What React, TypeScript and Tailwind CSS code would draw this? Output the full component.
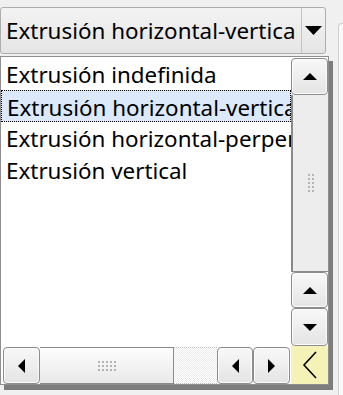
import React from "react";

type Dir = "up" | "down" | "left" | "right";

function Arrow({ dir }: { dir: Dir }) {
  if (dir === "up")
    return (
      <svg width="14" height="7" viewBox="0 0 14 7">
        <polygon points="0,7 7,0 14,7" fill="#000" />
      </svg>
    );
  if (dir === "down")
    return (
      <svg width="14" height="7" viewBox="0 0 14 7">
        <polygon points="0,0 14,0 7,7" fill="#000" />
      </svg>
    );
  if (dir === "left")
    return (
      <svg width="7" height="14" viewBox="0 0 7 14">
        <polygon points="7,0 7,14 0,7" fill="#000" />
      </svg>
    );
  return (
    <svg width="7" height="14" viewBox="0 0 7 14">
      <polygon points="0,0 7,7 0,14" fill="#000" />
    </svg>
  );
}

function ScrollBtn({ dir, className }: { dir: Dir; className: string }) {
  return (
    <div
      className={`flex shrink-0 items-center justify-center rounded-[4px] border border-[#8c8c8c] bg-gradient-to-b from-[#f8f8f8] to-[#e4e4e4] shadow-[inset_0_0_0_1px_#fbfbfb] ${className}`}
    >
      <Arrow dir={dir} />
    </div>
  );
}

function Grip({ cols, rows }: { cols: number; rows: number }) {
  const dots = [];
  for (let r = 0; r < rows; r++)
    for (let c = 0; c < cols; c++)
      dots.push(<rect key={`${r}-${c}`} x={c * 4} y={r * 4} width="2" height="2" fill="#b4b4b4" />);
  return (
    <svg width={cols * 4 - 2} height={rows * 4 - 2}>
      {dots}
    </svg>
  );
}

const items = [
  "Extrusión indefinida",
  "Extrusión horizontal-vertical",
  "Extrusión horizontal-perpendicular",
  "Extrusión vertical",
];

export default function App() {
  return (
    <div className="relative flex h-[395px] w-[343px] overflow-hidden bg-[#f0f0f0] font-['Noto_Sans',sans-serif] text-[22.4px] text-black">
      {/* Combo */}
      <div className="w-[338px] shrink-0 pt-[7px]">
        <div className="flex h-[47px] w-[326px] rounded-[3px] border border-[#adadad] bg-gradient-to-b from-[#f3f3f3] to-[#e5e5e5]">
          <div className="w-[296px] overflow-hidden whitespace-nowrap pl-[5px] leading-[45px]">
            Extrusión horizontal-vertical
          </div>
          <div className="ml-auto flex w-[24px] items-center justify-center border-l border-[#c4c4c4] pr-[1px]">
            <svg width="17" height="9" viewBox="0 0 17 9">
              <polygon points="0,0 17,0 8.5,9" fill="#000" />
            </svg>
          </div>
        </div>
      </div>

      {/* Next panel edge */}
      <div className="mt-[23px] flex-1 rounded-tl-[4px] border-l border-t border-[#cfcfcf] bg-[#f9f9f9]" />

      {/* Dropdown popup */}
      <div className="absolute left-0 top-[56px] flex h-[329px] w-[329px] flex-col border border-[#8f8f8f] bg-white shadow-[4px_5px_0_#7d7d7d]">
        <div className="flex h-[289px]">
          <div className="w-[290px] overflow-hidden pt-[1px]">
            {items.map((t, i) => (
              <div
                key={t}
                className={`h-[32px] whitespace-nowrap pl-[5px] pt-[1px] leading-[31px] ${
                  i === 1 ? "border border-dotted border-black bg-[#dbe9fb] pl-[4px] leading-[29px]" : ""
                }`}
              >
                {t}
              </div>
            ))}
          </div>
          <div className="flex w-[37px] flex-col">
            <ScrollBtn dir="up" className="mt-[1px] h-[37px]" />
            <div className="flex h-[177px] items-center justify-center border-b border-l-2 border-[#8a8a8a] bg-[#ededed]">
              <Grip cols={2} rows={5} />
            </div>
            <ScrollBtn dir="up" className="h-[36px]" />
            <ScrollBtn dir="down" className="h-[38px]" />
          </div>
        </div>
        <div className="flex h-[38px]">
          <div className="flex w-[290px] pl-[2px] pt-[1px]">
            <ScrollBtn dir="left" className="w-[37px]" />
            <div className="flex w-[134px] items-center justify-center border-y border-r border-[#8a8a8a] bg-gradient-to-b from-[#fdfdfd] to-[#e9e9e9]">
              <Grip cols={5} rows={3} />
            </div>
            <div className="w-[43px] border-y border-dotted border-[#bdbdbd] bg-[repeating-conic-gradient(#ececec_0%_25%,#ffffff_0%_50%)] bg-[length:2px_2px]" />
            <ScrollBtn dir="left" className="w-[36px]" />
            <ScrollBtn dir="right" className="w-[37px]" />
          </div>
          <div className="flex w-[37px] items-center justify-center bg-[#f4f2b6]">
            <svg width="16" height="28" viewBox="0 0 16 28">
              <polyline points="14,1 2,14 14,27" fill="none" stroke="#000" strokeWidth="1.6" />
            </svg>
          </div>
        </div>
      </div>
    </div>
  );
}
